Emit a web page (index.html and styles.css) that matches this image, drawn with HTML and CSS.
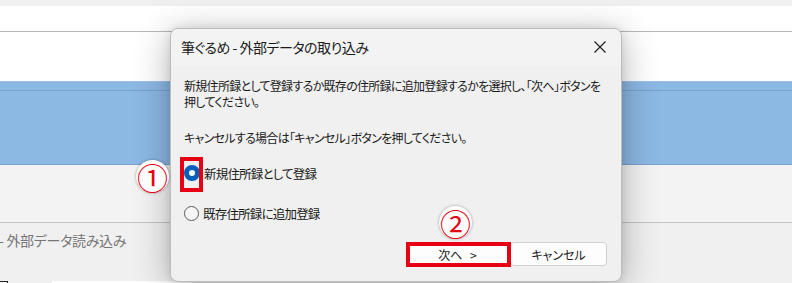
FILE: index.html
```html
<!DOCTYPE html>
<html lang="ja">
<head>
<meta charset="utf-8">
<link rel="stylesheet" href="styles.css">
</head>
<body>
<div class="app">
  <div class="band-top"></div>
  <div class="band-white1"></div>
  <div class="band-line"></div>
  <div class="band-white2"></div>
  <div class="band-blue"><div class="blue-line"></div></div>
  <div class="band-gray"></div>
  <div class="band-line2"></div>
  <div class="band-bottom">
    <div class="bg-title">- 外部データ読み込み</div>
    <div class="bg-row">
      <div class="bg-check"></div>
      <div class="bg-box"></div>
    </div>
  </div>
</div>

<div class="dialog">
  <div class="titlebar">
    <span class="title">筆ぐるめ - 外部データの取り込み</span>
    <svg class="close" width="12" height="12" viewBox="0 0 12 12"><path d="M0.5 0.5 L11.5 11.5 M11.5 0.5 L0.5 11.5" stroke="#1a1a1a" stroke-width="1.1" fill="none"/></svg>
  </div>
  <div class="content">
    <p class="msg">新規住所録として登録するか既存の住所録に追加登録するかを選択し、「次へ」ボタンを<br>押してください。</p>
    <p class="msg msg2">キャンセルする場合は「キャンセル」ボタンを押してください。</p>
    <div class="option opt1">
      <span class="radio on"></span><span class="label">新規住所録として登録</span>
    </div>
    <div class="option opt2">
      <span class="radio"></span><span class="label">既存住所録に追加登録</span>
    </div>
    <div class="buttons">
      <div class="btn next">次へ &gt;</div>
      <div class="btn cancel">キャンセル</div>
    </div>
  </div>
</div>

<div class="hl hl-radio"></div>
<div class="hl hl-next"></div>
<div class="badge badge1">①</div>
<div class="badge badge2">②</div>
</body>
</html>
```

FILE: styles.css
```css
* { box-sizing: border-box; }
html, body { margin: 0; padding: 0; }
body {
  width: 792px;
  height: 283px;
  overflow: hidden;
  background: #f0f0f0;
  font-family: "Noto Sans CJK JP", "Noto Sans", sans-serif;
  font-feature-settings: "palt";
  position: relative;
}
.app { display: flex; flex-direction: column; height: 283px; }
.band-top { height: 6px; background: #f0f0f0; flex: none; }
.band-white1 { height: 25px; background: #ffffff; flex: none; }
.band-line { height: 1px; background: #b9b9b9; flex: none; }
.band-white2 { height: 49px; background: #ffffff; flex: none; }
.band-blue {
  flex: none;
  height: 84px;
  background: #8cb8e4;
  border-top: 1px solid #9cc2e8;
  border-bottom: 1px solid #7aa2cc;
  padding-top: 8px;
}
.blue-line { height: 1px; background: #7aa3cf; }
.band-gray { height: 57px; background: #f3f3f3; flex: none; }
.band-line2 { height: 1px; background: #c4c4c4; flex: none; }
.band-bottom { flex: 1; background: #f0f0f0; display: flex; flex-direction: column; }
.bg-title {
  font-size: 14px;
  color: #767676;
  margin-left: -1px;
  margin-top: 6px;
  height: 22px;
  line-height: 22px;
  letter-spacing: -0.3px;
  white-space: nowrap;
}
.bg-row { display: flex; margin-top: 30px; gap: 44px; }
.bg-check { width: 9px; height: 10px; border: 1px solid #222; background: #fff; margin-left: -1px; }
.bg-box { width: 140px; height: 10px; background: #ffffff; }

.dialog {
  position: absolute;
  left: 170px;
  top: 28px;
  width: 452px;
  height: 254px;
  background: #f0f0f0;
  border: 1px solid #bcbcbc;
  border-radius: 8px;
  box-shadow: 0 6px 36px rgba(0,0,0,0.30), 0 0 8px rgba(0,0,0,0.10);
  overflow: hidden;
  display: flex;
  flex-direction: column;
}
.titlebar {
  flex: none;
  height: 37px;
  background: #f3f3f3;
  display: flex;
  align-items: center;
  justify-content: space-between;
  padding: 0 15px 0 10px;
}
.title { font-size: 14px; color: #1a1a1a; margin-top: -1px; letter-spacing: -0.5px; white-space: nowrap; }
.close { display: block; margin-top: -1px; }
.content { flex: 1; padding: 12px 0 0 13px; display: flex; flex-direction: column; }
.msg {
  margin: 0;
  font-size: 12px;
  line-height: 16px;
  color: #1a1a1a;
  letter-spacing: -0.7px;
  white-space: nowrap;
}
.msg2 { margin-top: 20px; }
.option { display: flex; align-items: center; height: 18px; flex: none; }
.opt1 { margin-top: 18px; }
.opt2 { margin-top: 22px; }
.radio {
  width: 15px;
  height: 15px;
  border-radius: 50%;
  border: 1px solid #5a5a5a;
  background: #f6f6f6;
  margin-right: 4px;
  flex: none;
}
.radio.on {
  border: 5px solid #005fb8;
  background: #ffffff;
  width: 16px;
  height: 16px;
}
.label { font-size: 12.5px; color: #1a1a1a; letter-spacing: -0.8px; white-space: nowrap; }
.buttons { display: flex; margin-top: 20px; margin-left: 223px; flex: none; }
.btn {
  height: 24px;
  font-size: 12px;
  display: flex;
  align-items: center;
  justify-content: center;
  background: #fdfdfd;
  color: #1a1a1a;
  border: 1px solid #d0d0d0;
  border-radius: 4px;
  white-space: pre;
}
.next { width: 104px; border-right: 2px solid #005fb8; word-spacing: 5px; padding-right: 2px; }
.cancel { width: 97px; margin-left: -1px; }

.hl { position: absolute; border: 4px solid #e60012; }
.hl-radio { left: 180px; top: 157px; width: 23px; height: 35px; }
.hl-next { left: 406px; top: 242px; width: 105px; height: 25px; }

.badge {
  position: absolute;
  width: 33px;
  height: 33px;
  border-radius: 50%;
  background: #ffffff;
  box-shadow: 0 0 3px rgba(0,0,0,0.35);
  color: #e60012;
  font-size: 31px;
  line-height: 33px;
  text-align: center;
  font-family: "Noto Sans CJK JP", sans-serif;
  font-feature-settings: normal;
}
.badge1 { left: 136px; top: 160px; }
.badge2 { left: 439px; top: 206px; }
```
